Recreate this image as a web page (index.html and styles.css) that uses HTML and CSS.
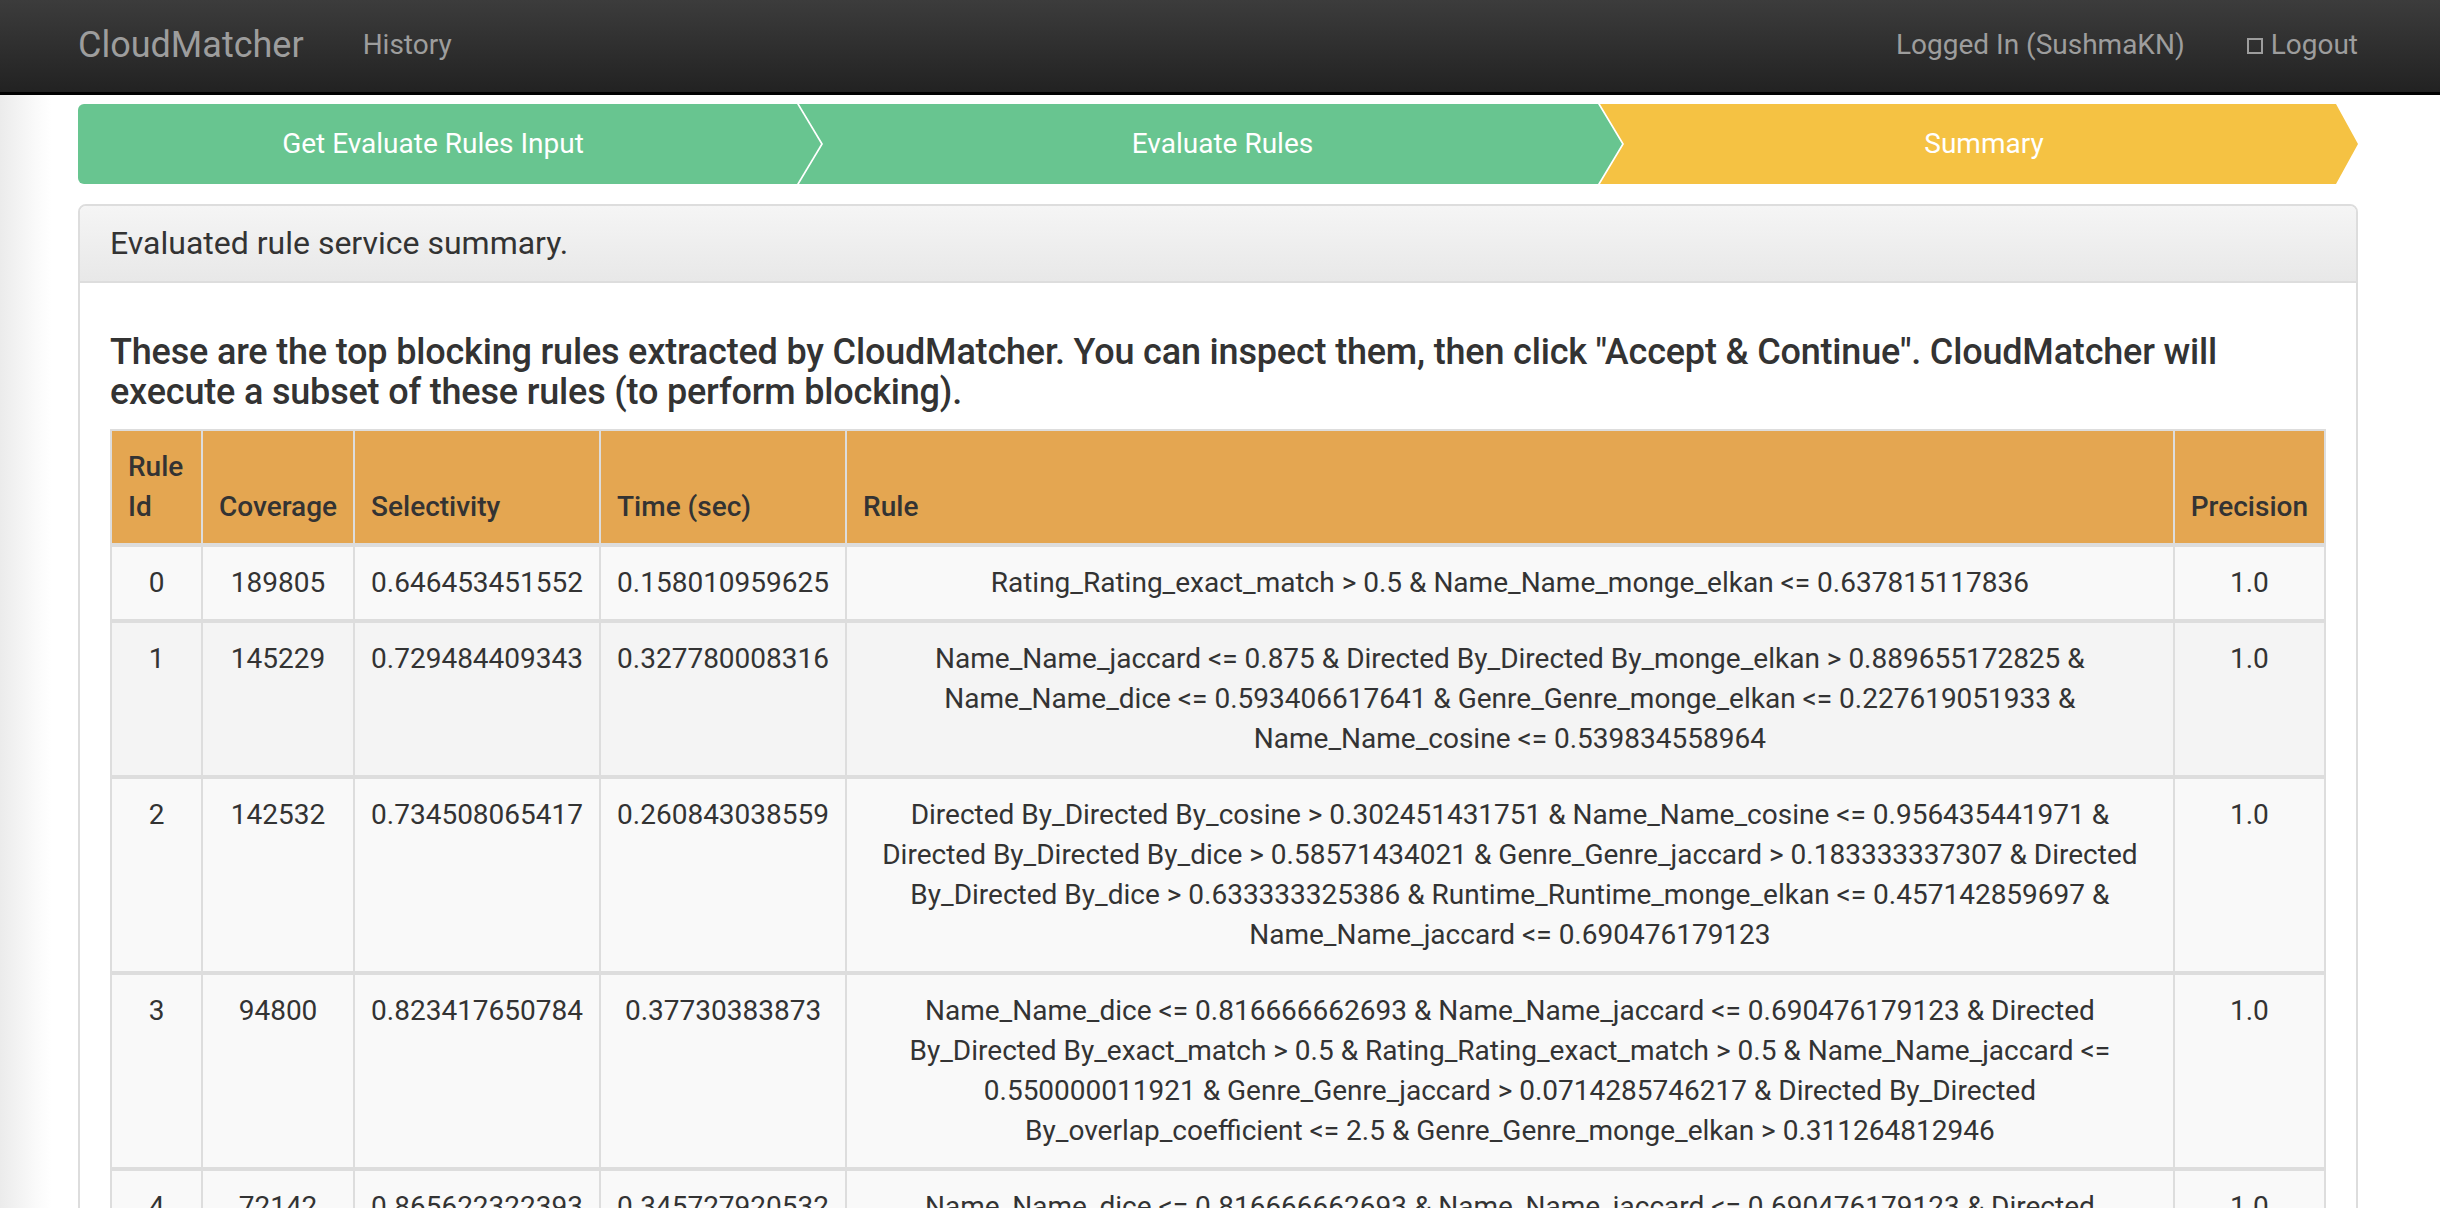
FILE: index.html
```html
<!DOCTYPE html>
<html lang="en">
<head>
<meta charset="utf-8">
<title>CloudMatcher - Summary</title>
<link rel="stylesheet" href="styles.css">
</head>
<body>
<header class="navbar">
  <div class="navbar-inner">
    <span class="brand">CloudMatcher</span>
    <a class="nav-link history">History</a>
    <div class="nav-right">
      <a class="nav-link">Logged In (SushmaKN)</a>
      <a class="nav-link logout"><span class="box-icon"></span>Logout</a>
    </div>
  </div>
</header>

<main class="main">
  <div class="steps">
    <div class="step step-1 done">Get Evaluate Rules Input</div>
    <div class="step step-2 done">Evaluate Rules</div>
    <div class="step step-3 current">Summary</div>
  </div>

  <section class="panel">
    <div class="panel-heading">Evaluated rule service summary.</div>
    <div class="panel-body">
      <h4 class="intro">These are the top blocking rules extracted by CloudMatcher. You can inspect them, then click "Accept &amp; Continue". CloudMatcher will execute a subset of these rules (to perform blocking).</h4>
      <table class="rules">
        <colgroup>
          <col class="c-id">
          <col class="c-cov">
          <col class="c-sel">
          <col class="c-time">
          <col class="c-rule">
          <col class="c-prec">
        </colgroup>
        <thead>
          <tr>
            <th>Rule Id</th>
            <th>Coverage</th>
            <th>Selectivity</th>
            <th>Time (sec)</th>
            <th>Rule</th>
            <th>Precision</th>
          </tr>
        </thead>
        <tbody>
          <tr>
            <td>0</td>
            <td>189805</td>
            <td>0.646453451552</td>
            <td>0.158010959625</td>
            <td>Rating_Rating_exact_match &gt; 0.5 &amp; Name_Name_monge_elkan &lt;= 0.637815117836</td>
            <td>1.0</td>
          </tr>
          <tr class="hovered">
            <td>1</td>
            <td>145229</td>
            <td>0.729484409343</td>
            <td>0.327780008316</td>
            <td>Name_Name_jaccard &lt;= 0.875 &amp; Directed By_Directed By_monge_elkan &gt; 0.889655172825 &amp; Name_Name_dice &lt;= 0.593406617641 &amp; Genre_Genre_monge_elkan &lt;= 0.227619051933 &amp; Name_Name_cosine &lt;= 0.539834558964</td>
            <td>1.0</td>
          </tr>
          <tr>
            <td>2</td>
            <td>142532</td>
            <td>0.734508065417</td>
            <td>0.260843038559</td>
            <td>Directed By_Directed By_cosine &gt; 0.302451431751 &amp; Name_Name_cosine &lt;= 0.956435441971 &amp; Directed By_Directed By_dice &gt; 0.58571434021 &amp; Genre_Genre_jaccard &gt; 0.183333337307 &amp; Directed By_Directed By_dice &gt; 0.633333325386 &amp; Runtime_Runtime_monge_elkan &lt;= 0.457142859697 &amp; Name_Name_jaccard &lt;= 0.690476179123</td>
            <td>1.0</td>
          </tr>
          <tr>
            <td>3</td>
            <td>94800</td>
            <td>0.823417650784</td>
            <td>0.37730383873</td>
            <td>Name_Name_dice &lt;= 0.816666662693 &amp; Name_Name_jaccard &lt;= 0.690476179123 &amp; Directed By_Directed By_exact_match &gt; 0.5 &amp; Rating_Rating_exact_match &gt; 0.5 &amp; Name_Name_jaccard &lt;= 0.550000011921 &amp; Genre_Genre_jaccard &gt; 0.0714285746217 &amp; Directed By_Directed By_overlap_coefficient &lt;= 2.5 &amp; Genre_Genre_monge_elkan &gt; 0.311264812946</td>
            <td>1.0</td>
          </tr>
          <tr>
            <td>4</td>
            <td>72142</td>
            <td>0.865622322393</td>
            <td>0.345727920532</td>
            <td>Name_Name_dice &lt;= 0.816666662693 &amp; Name_Name_jaccard &lt;= 0.690476179123 &amp; Directed By_Directed By_exact_match &gt; 0.5 &amp; Name_Name_jaccard &lt;= 0.550000011921 &amp; Genre_Genre_jaccard &gt; 0.0714285746217 &amp; Genre_Genre_monge_elkan &gt; 0.311264812946</td>
            <td>1.0</td>
          </tr>
        </tbody>
      </table>
    </div>
  </section>
</main>
</body>
</html>
```

FILE: styles.css
```css
* {
  box-sizing: border-box;
}

html,
body {
  margin: 0;
  padding: 0;
}

body {
  font-family: Roboto, "Helvetica Neue", "Liberation Sans", Arial, sans-serif;
  font-size: 28px;
  line-height: 1.42857;
  color: #333;
  background: #fff linear-gradient(to right, #ebebeb 0, #fafafa 36px, #fff 52px);
  height: 1208px;
  overflow: hidden;
}

/* ---------- navbar ---------- */
.navbar {
  height: 95px;
  background: linear-gradient(to bottom, #3c3c3c 0%, #222 100%);
  border-bottom: 3px solid #000;
}

.navbar-inner {
  width: 2280px;
  margin-left: 78px;
  height: 100%;
  display: flex;
  align-items: center;
  padding-bottom: 2px;
}

.brand {
  font-size: 36px;
  color: #9d9d9d;
  line-height: 1;
}

.nav-link {
  font-size: 28px;
  color: #9d9d9d;
  text-decoration: none;
}

.history {
  margin-left: 59px;
}

.nav-right {
  margin-left: auto;
  display: flex;
  align-items: center;
  gap: 62px;
}

.logout {
  display: flex;
  align-items: center;
}

.box-icon {
  display: inline-block;
  width: 16px;
  height: 16px;
  border: 2px solid #9d9d9d;
  margin-right: 8px;
  margin-top: 2px;
}

/* ---------- steps ---------- */
.main {
  width: 2280px;
  margin-left: 78px;
  padding-top: 9px;
}

.steps {
  display: flex;
  height: 80px;
}

.step {
  display: flex;
  align-items: center;
  justify-content: center;
  color: #fff;
  font-size: 28px;
}

.step.done {
  background: #68c590;
}

.step.current {
  background: #f5c243;
}

.step-1 {
  flex: 0 0 743px;
  padding: 0 33px 0 0;
  border-radius: 6px 0 0 6px;
  clip-path: polygon(0 0, calc(100% - 24px) 0, 100% 50%, calc(100% - 24px) 100%, 0 100%);
}

.step-2 {
  flex: 0 0 823px;
  margin-left: -22px;
  padding: 0 24px 0 48px;
  clip-path: polygon(0 0, calc(100% - 24px) 0, 100% 50%, calc(100% - 24px) 100%, 0 100%, 24px 50%);
}

.step-3 {
  flex: 0 0 758px;
  margin-left: -22px;
  padding: 0 24px 0 34px;
  clip-path: polygon(0 0, calc(100% - 22px) 0, 100% 50%, calc(100% - 22px) 100%, 0 100%, 24px 50%);
}

/* ---------- panel ---------- */
.panel {
  margin-top: 20px;
  border: 2px solid #ddd;
  border-radius: 8px;
  background: #fff;
}

.panel-heading {
  padding: 20px 30px;
  font-size: 32px;
  line-height: 1.1;
  color: #333;
  background: linear-gradient(to bottom, #f5f5f5 0%, #e8e8e8 100%);
  border-bottom: 2px solid #ddd;
  border-radius: 6px 6px 0 0;
}

.panel-body {
  padding: 30px;
}

.intro {
  margin: 20px 0 17px;
  font-size: 36px;
  font-weight: 500;
  line-height: 1.1;
  letter-spacing: -0.18px;
  color: #333;
}

/* ---------- table ---------- */
.rules {
  width: 100%;
  border-collapse: collapse;
  border: 2px solid #ddd;
}

.c-id { width: 91px; }
.c-cov { width: 152px; }
.c-sel { width: 246px; }
.c-time { width: 246px; }
.c-prec { width: 151px; }

.rules th,
.rules td {
  padding: 16px;
  border: 2px solid #ddd;
  line-height: 1.42857;
}

.rules thead th {
  background: #e4a651;
  border-bottom: 4px solid #ddd;
  text-align: left;
  vertical-align: bottom;
  font-weight: 500;
}

.rules tbody td {
  background: #f9f9f9;
  border-top: 4px solid #ddd;
  text-align: center;
  vertical-align: top;
}

.rules tbody tr.hovered td {
  background: #f4f4f4;
}
```
